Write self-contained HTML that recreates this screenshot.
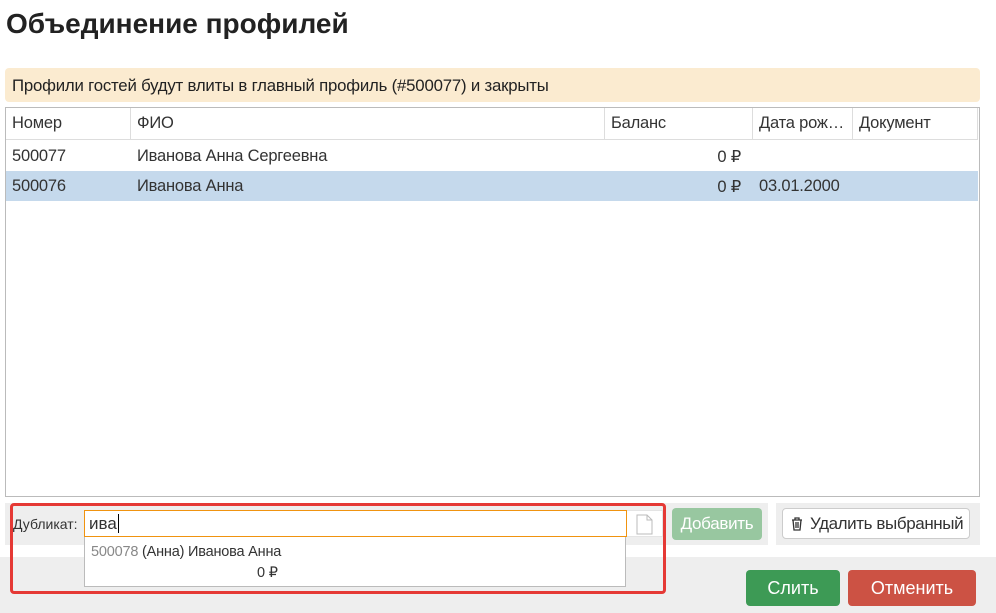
<!DOCTYPE html>
<html><head><meta charset="utf-8"><style>
*{box-sizing:border-box;margin:0;padding:0}
body{width:996px;height:613px;background:#fff;font-family:"Liberation Sans",sans-serif;font-size:16px;color:#333;position:relative;overflow:hidden}
.a{position:absolute}
h1{position:absolute;left:6px;top:8px;font-size:28px;font-weight:bold;color:#222;letter-spacing:0}
.banner{left:5px;top:68px;width:975px;height:34px;background:#fbebd0;border-radius:4px;padding:8px 7px;font-size:16.8px;color:#222;letter-spacing:-0.2px}
.tbl{left:5px;top:107px;width:975px;height:390px;border:1px solid #bbb;background:#fff}
.hd{position:absolute;left:0;top:0;width:972px;height:32px;border-bottom:1px solid #ddd}
.c{position:absolute;top:0;height:100%;padding:6px 6px;font-size:16.5px;white-space:nowrap;letter-spacing:-0.2px}
.hd .c{border-right:1px solid #ddd}
.row{position:absolute;left:0;width:972px;height:30px}
.foot{left:0;top:557px;width:996px;height:56px;background:#eee}
</style></head><body>
<h1>Объединение профилей</h1>
<div class="a banner">Профили гостей будут влиты в главный профиль (#500077) и закрыты</div>
<div class="a tbl">
 <div class="hd">
  <div class="c" style="left:0;width:125px">Номер</div>
  <div class="c" style="left:125px;width:474px">ФИО</div>
  <div class="c" style="left:599px;width:148px">Баланс</div>
  <div class="c" style="left:747px;width:100px">Дата рож…</div>
  <div class="c" style="left:847px;width:125px">Документ</div>
 </div>
 <div class="row" style="top:33px">
  <div class="c" style="left:0">500077</div>
  <div class="c" style="left:125px">Иванова Анна Сергеевна</div>
  <div class="c" style="left:599px;width:142px;text-align:right">0 ₽</div>
 </div>
 <div class="row" style="top:63px;background:#c5d9ec">
  <div class="c" style="left:0">500076</div>
  <div class="c" style="left:125px">Иванова Анна</div>
  <div class="c" style="left:599px;width:142px;text-align:right">0 ₽</div>
  <div class="c" style="left:747px">03.01.2000</div>
 </div>
</div>
<div class="a foot"></div>
<div class="a" style="left:5px;top:503px;width:660px;height:42px;background:#eee"></div>
<div class="a" style="left:665px;top:503px;width:103px;height:42px;background:#eee"></div>
<div class="a" style="left:776px;top:503px;width:204px;height:42px;background:#eee"></div>
<div class="a" style="left:13px;top:516px;font-size:14px;color:#333">Дубликат:</div>
<div class="a" style="left:84px;top:510px;width:543px;height:27px;border:1px solid #f0930f;background:#fff;padding:3px 4px;font-size:17px">ива<span style="border-left:1px solid #000;margin-left:1px"></span></div>
<div class="a" style="left:627px;top:510px;width:36px;height:27px;background:#fff;border:1px solid #e4e4e4;border-left:none">
 <svg width="36" height="27"><path d="M10 4h10l5 5v14H10z M20 4v5h5" fill="#fff" stroke="#bbb" stroke-width="1"/></svg></div>
<div class="a" style="left:84px;top:537px;width:542px;height:50px;background:#fff;border:1px solid #bbb;border-top:none;font-size:14.5px;letter-spacing:-0.2px">
 <div class="a" style="left:6px;top:7px"><span style="color:#888">500078</span> (Анна) Иванова Анна</div>
 <div class="a" style="left:172px;top:28px">0 ₽</div>
</div>
<div class="a" style="left:10px;top:503px;width:656px;height:91px;border:3px solid #e53935;border-radius:4px"></div>
<div class="a" style="left:672px;top:508px;width:90px;height:32px;background:#98c7a0;border-radius:4px;color:#fff;font-size:17px;text-align:center;line-height:32px;letter-spacing:-0.3px">Добавить</div>
<div class="a" style="left:782px;top:508px;width:188px;height:31px;background:#fff;border:1px solid #ccc;border-radius:4px;font-size:17px;line-height:29px;padding-left:27px;letter-spacing:-0.4px;white-space:nowrap">Удалить выбранный
 <svg class="a" style="left:8px;top:8px" width="12" height="14"><path d="M1 3h10M4 3V1h4v2M2 3l1 10h6l1-10M5 5v6M7 5v6" fill="none" stroke="#333" stroke-width="1.3"/></svg></div>
<div class="a" style="left:746px;top:570px;width:94px;height:36px;background:#3d9a55;border-radius:4px;color:#fff;font-size:18px;text-align:center;line-height:36px">Слить</div>
<div class="a" style="left:848px;top:570px;width:128px;height:36px;background:#cc5244;border-radius:4px;color:#fff;font-size:18px;text-align:center;line-height:36px">Отменить</div>
</body></html>
